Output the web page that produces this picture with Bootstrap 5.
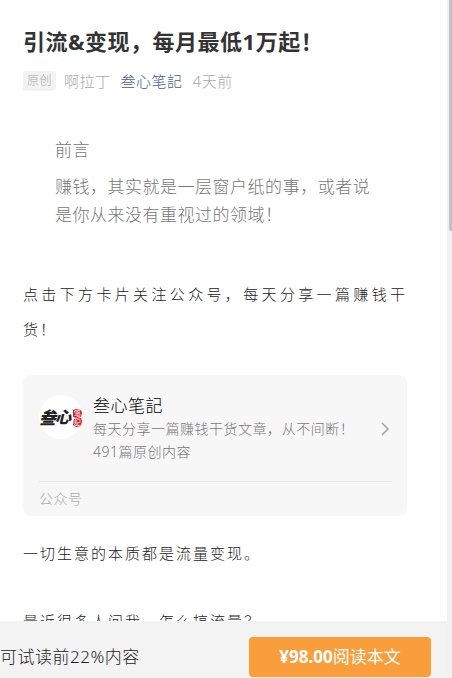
<!DOCTYPE html>
<html lang="zh-CN">
<head>
<meta charset="utf-8">
<meta name="viewport" content="width=device-width, initial-scale=1">
<title>引流&amp;变现，每月最低1万起！</title>
<link href="https://cdn.jsdelivr.net/npm/bootstrap@5.3.0/dist/css/bootstrap.min.css" rel="stylesheet">
<style>
body{font-family:"Noto Sans","Noto Sans CJK SC",sans-serif;font-size:17px;font-weight:300;color:#222;background:#fff}
a{text-decoration:none}
.reader{min-width:0;letter-spacing:.03em}
.article{padding:25px 40px 0 23px;scrollbar-width:none;min-height:0}
.article::-webkit-scrollbar{display:none}
.headline{font-size:22px;line-height:32px;font-weight:700;color:#333;margin-bottom:14px}
.meta{font-size:15px;line-height:20px;color:#aaa;margin-bottom:45px}
.origin{font-size:12px;line-height:20px;background:#f2f2f2;border-radius:3px;padding:0 4px;margin-right:8px}
.author{margin-right:10px}
.account{color:#46598a;margin-right:10px}
.quote{color:#777;line-height:28px;padding:0 32px;margin-bottom:48px}
.quote p{margin-bottom:9px}
.copy{font-size:15px;line-height:35px;letter-spacing:2px;text-align:justify;margin-bottom:28px}
.copy-last{padding-top:33px}
.profile{background:#f7f7f7;border-radius:8px;padding:20px 15px 0 16px;margin-bottom:20px;color:#777;font-size:14px;line-height:23px}
.profile-main{padding-bottom:18px;border-bottom:1px solid #e8e8e8}
.profile-name{font-size:17px;line-height:22px;color:#000}
.profile-text{margin-left:10px}
.profile-kind{color:#aaa;line-height:34px}
.paybar{background:#f3f3f3;padding:16px 16px 1px 0}
.buy{width:182px;height:40px;padding:0;border:0;border-radius:4px;background:#fa9d3b;color:#fff;font-size:17px;font-weight:400;letter-spacing:normal}
.buy:hover{background:#f29330;color:#fff}
.rail{width:5px;background:#f1f1f1;padding-left:2px}
.thumb{height:34%;background:#c1c1c6;border-radius:0 0 0 2px}
</style>
<script src="https://cdn.jsdelivr.net/npm/bootstrap@5.3.0/dist/js/bootstrap.bundle.min.js"></script>
</head>
<body>
<div class="d-flex vh-100">
  <div class="reader d-flex flex-column flex-grow-1">
    <main class="article flex-grow-1 overflow-auto">
      <h1 class="headline">引流&amp;变现，每月最低1万起！</h1>
      <div class="meta d-flex align-items-center">
        <span class="origin">原创</span><span class="author">啊拉丁</span><a class="account" href="#profile">叁心笔記</a><time>4天前</time>
      </div>
      <blockquote class="quote">
        <p>前言</p>
        <p class="mb-0">赚钱，其实就是一层窗户纸的事，或者说是你从来没有重视过的领域！</p>
      </blockquote>
      <p class="copy">点击下方卡片关注公众号，每天分享一篇赚钱干货！</p>
      <section class="profile" id="profile">
        <a class="profile-main d-flex align-items-start text-reset" href="#profile">
          <svg class="flex-shrink-0" width="44" height="44" viewBox="0 0 44 44" aria-hidden="true">
            <circle cx="22" cy="22" r="22" fill="#fff"/>
            <g font-family="Noto Sans CJK SC" font-weight="900" letter-spacing="0">
              <text x="0" y="29" font-size="17" font-style="italic" fill="#222">叁</text>
              <text x="16" y="28" font-size="16" font-style="italic" fill="#222">心</text>
              <path d="M34 15l3-1 5 1 1 3-1 4-4 1-4-1zM35 24l7-1 1 3-1 5-5 1-3-2z" fill="#d61f26"/>
              <text x="35" y="21" font-size="7" font-weight="400" fill="#fff">笔</text>
              <text x="35" y="30" font-size="7" font-weight="400" fill="#fff">記</text>
            </g>
          </svg>
          <span class="profile-text flex-grow-1">
            <span class="profile-name d-block">叁心笔記</span>
            <span class="d-block">每天分享一篇赚钱干货文章，从不间断！</span>
            <span class="d-block">491篇原创内容</span>
          </span>
          <svg class="flex-shrink-0 align-self-center" width="12" height="14" viewBox="0 0 12 14" fill="none" stroke="#a8a8a8" stroke-width="1.6" aria-hidden="true"><path d="M2 1l6 6-6 6"/></svg>
        </a>
        <div class="profile-kind">公众号</div>
      </section>
      <p class="copy mb-0">一切生意的本质都是流量变现。</p>
      <p class="copy copy-last">最近很多人问我，怎么搞流量？</p>
    </main>
    <footer class="paybar d-flex align-items-center justify-content-between flex-shrink-0">
      <span>可试读前22%内容</span>
      <button class="buy btn" type="button"><b>¥98.00</b>阅读本文</button>
    </footer>
  </div>
  <div class="rail flex-shrink-0" aria-hidden="true"><div class="thumb"></div></div>
</div>
</body>
</html>
